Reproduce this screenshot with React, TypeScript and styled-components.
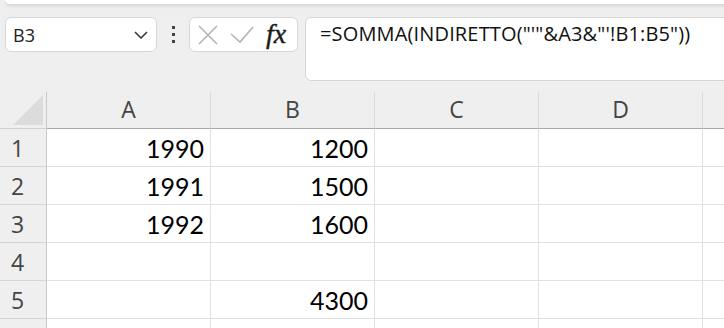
import React from "react";
import styled, { createGlobalStyle } from "styled-components";

const GlobalStyle = createGlobalStyle`
  html, body {
    margin: 0;
    padding: 0;
    background: #efefef;
    overflow: hidden;
  }
  body {
    font-family: "Open Sans", "Noto Sans", sans-serif;
  }
`;

const Page = styled.div`
  width: 724px;
  height: 328px;
  overflow: hidden;
  background: #efefef;
`;

const Ribbon = styled.div`
  height: 4px;
  margin-left: 5px;
  margin-right: -20px;
  background: #ffffff;
  border-bottom: 1px solid #dadada;
  border-bottom-left-radius: 8px;
  box-shadow: 0 2px 3px rgba(0, 0, 0, 0.08);
`;

const Toolbar = styled.div`
  display: flex;
  align-items: flex-start;
  margin-top: 12px;
  padding-left: 5px;
`;

const NameBox = styled.div`
  box-sizing: border-box;
  width: 152px;
  height: 35px;
  background: #fff;
  border: 1px solid #d6d6d6;
  border-radius: 6px;
  display: flex;
  align-items: center;
  justify-content: space-between;
  padding: 0 8px 0 7px;
  font-size: 18px;
  color: #222;
`;

const DotsCol = styled.div`
  width: 32px;
  height: 35px;
  display: flex;
  flex-direction: column;
  align-items: center;
  justify-content: center;
  gap: 4px;
`;

const Dot = styled.span`
  width: 3px;
  height: 3px;
  background: #444;
`;

const FuncBox = styled.div`
  box-sizing: border-box;
  width: 109px;
  height: 35px;
  background: #fff;
  border: 1px solid #d6d6d6;
  border-radius: 6px;
  display: flex;
  align-items: center;
  padding-left: 8px;
  gap: 12px;
`;

const Fx = styled.span`
  font-family: "Liberation Serif", "DejaVu Serif", serif;
  font-style: italic;
  font-size: 28px;
  color: #1a1a1a;
  line-height: 1;
  margin-top: -2px;
  -webkit-text-stroke: 0.4px #1a1a1a;
`;

const FormulaBar = styled.div`
  box-sizing: border-box;
  flex: 1;
  height: 64px;
  margin-left: 7px;
  margin-right: -20px;
  background: #fff;
  border: 1px solid #d6d6d6;
  border-radius: 6px;
  padding: 2px 0 0 14px;
  font-size: 20px;
  letter-spacing: 0.15px;
  color: #111;
  white-space: nowrap;
`;

const Sheet = styled.div`
  margin-top: 11px;
`;

const Row = styled.div<{ $header?: boolean }>`
  display: flex;
  height: ${p => (p.$header ? 37 : 38)}px;
`;

const Corner = styled.div`
  box-sizing: border-box;
  position: relative;
  width: 47px;
  flex: none;
  border-right: 1px solid #c8c8c8;
  border-bottom: 1px solid #d2d2d2;
`;

const Triangle = styled.div`
  position: absolute;
  left: 13px;
  top: 3px;
  width: 30px;
  height: 30px;
  background: #dcdcdc;
  clip-path: polygon(100% 0, 100% 100%, 0 100%);
`;

const ColHead = styled.div`
  box-sizing: border-box;
  width: 164px;
  flex: none;
  border-right: 1px solid #dadada;
  border-bottom: 1px solid #a9a9a9;
  display: flex;
  align-items: center;
  justify-content: center;
  font-size: 23px;
  color: #444;
  padding-bottom: 2px;
`;

const RowHead = styled.div`
  box-sizing: border-box;
  width: 47px;
  flex: none;
  border-right: 1px solid #c8c8c8;
  border-bottom: 1px solid #d4d4d4;
  display: flex;
  align-items: center;
  padding-left: 11px;
  font-size: 23px;
  color: #444;
`;

const Cell = styled.div`
  box-sizing: border-box;
  width: 164px;
  flex: none;
  background: #fff;
  border-right: 1px solid #e1e1e1;
  border-bottom: 1px solid #e1e1e1;
  display: flex;
  align-items: center;
  justify-content: flex-end;
  padding-right: 6px;
  font-family: Lato, "Open Sans", sans-serif;
  font-size: 25px;
  color: #000;
`;

const columns = ["A", "B", "C", "D", ""];

const data: string[][] = [
  ["1990", "1200", "", "", ""],
  ["1991", "1500", "", "", ""],
  ["1992", "1600", "", "", ""],
  ["", "", "", "", ""],
  ["", "4300", "", "", ""],
  ["", "", "", "", ""],
];

export default function App() {
  return (
    <Page>
      <GlobalStyle />
      <Ribbon />
      <Toolbar>
        <NameBox>
          <span>B3</span>
          <svg width="14" height="8" viewBox="0 0 14 8">
            <path d="M1 1l6 6 6-6" fill="none" stroke="#333" strokeWidth="1.5" />
          </svg>
        </NameBox>
        <DotsCol>
          <Dot />
          <Dot />
          <Dot />
        </DotsCol>
        <FuncBox>
          <svg width="20" height="20" viewBox="0 0 20 20">
            <path d="M1 1l18 18M19 1L1 19" stroke="#b3b3b3" strokeWidth="1.6" fill="none" />
          </svg>
          <svg width="24" height="18" viewBox="0 0 24 18">
            <path d="M1 8l9 8L23 1" stroke="#b3b3b3" strokeWidth="1.6" fill="none" />
          </svg>
          <Fx>fx</Fx>
        </FuncBox>
        <FormulaBar>=SOMMA(INDIRETTO("'"&amp;A3&amp;"'!B1:B5"))</FormulaBar>
      </Toolbar>
      <Sheet>
        <Row $header>
          <Corner>
            <Triangle />
          </Corner>
          {columns.map((c, i) => (
            <ColHead key={i}>{c}</ColHead>
          ))}
        </Row>
        {data.map((row, i) => (
          <Row key={i}>
            <RowHead>{i < 5 ? i + 1 : ""}</RowHead>
            {row.map((v, j) => (
              <Cell key={j}>{v}</Cell>
            ))}
          </Row>
        ))}
      </Sheet>
    </Page>
  );
}
